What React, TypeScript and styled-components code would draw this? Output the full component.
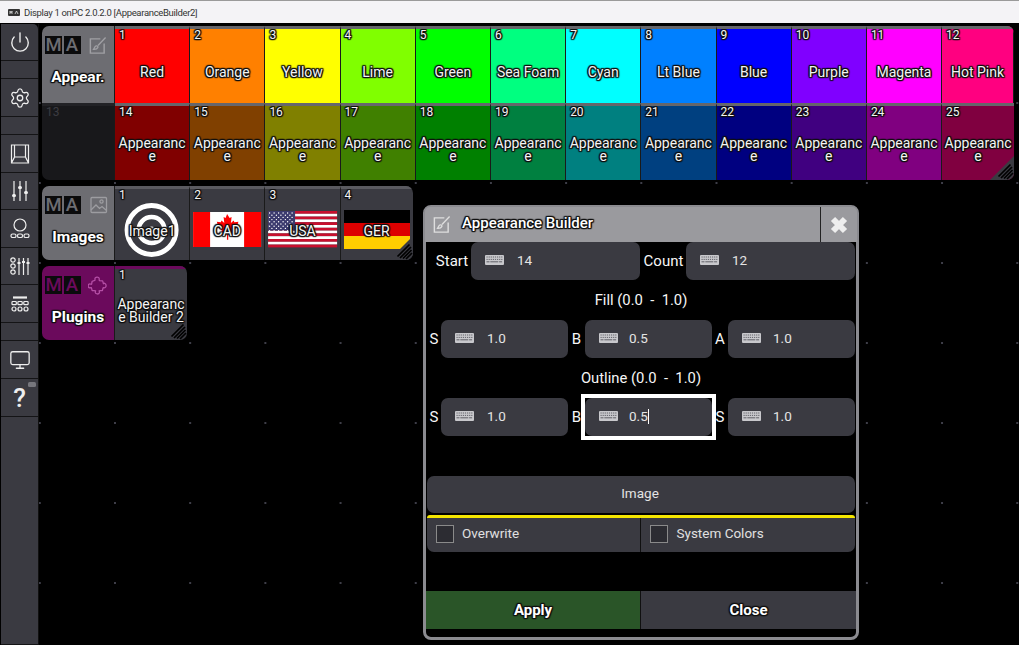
import React from "react";
import styled, { createGlobalStyle, css } from "styled-components";
import { Power, Settings, Monitor } from "lucide-react";

const Global = createGlobalStyle`
  html, body { margin: 0; padding: 0; background: #000; height: 100%; overflow: hidden; }
  #root { height: 100%; }
  * { box-sizing: border-box; }
`;

const outline = css`
  text-shadow: 1px 0 1px #111, -1px 0 1px #111, 0 1px 1px #111, 0 -1px 1px #111, 1px 1px 1px #111, -1px -1px 1px #111, 1px -1px 1px #111, -1px 1px 1px #111;
`;

const Page = styled.div`
  width: 1019px; height: 645px; display: flex; flex-direction: column; position: relative;
  font-family: Roboto, "Liberation Sans", sans-serif; color: #f0f0f0; background: #000; overflow: hidden;
`;
const TitleBar = styled.header`
  height: 24px; flex: none; display: flex; align-items: center; gap: 4px; padding: 0 0 0 8px;
  background: #f4f3f6; border-top: 1px solid #9a9a9a; border-bottom: 1px solid #000; color: #333;
  font: 9.5px Roboto, "Liberation Sans", sans-serif; letter-spacing: -0.33px;
`;
const Work = styled.div`flex: 1; display: flex; min-height: 0;`;
const Sidebar = styled.nav`
  width: 39px; flex: none; display: flex; flex-direction: column; padding-left: 1px; background: #000; border-right: 1px solid #111;
`;
const SideButton = styled.div<{ $h: number; $fill?: boolean }>`
  height: ${p => p.$h}px; flex: ${p => (p.$fill ? 1 : "none")}; position: relative;
  display: flex; align-items: center; justify-content: center;
  background: #3a3a41; border-bottom: 1px solid #141416; color: #eee;
  &:first-child { border-top-right-radius: 5px; }
`;
const Badge = styled.span`
  position: absolute; top: 3px; right: 2px; width: 8px; height: 5px; border-radius: 1.5px; background: #77777d;
`;
const Question = styled.span`font: 500 26px Roboto, sans-serif; color: #eee;`;
const Main = styled.main`
  flex: 1; padding: 2px 0 0 3px; display: flex; flex-direction: column; gap: 6px; position: relative;
  background-image: radial-gradient(circle at 1px 1px, #3e3e48 0.9px, transparent 1.3px);
  background-size: 75.2px 80px; background-position: 75px 78px;
`;
const Pool = styled.section<{ $cols: number; $rowH: number }>`
  display: grid; width: fit-content; border-radius: 7px; overflow: hidden;
  grid-template-columns: 73px ${p => (p.$cols > 1 ? `repeat(${p.$cols - 1}, 75.2px)` : "")} 72px;
  grid-auto-rows: ${p => p.$rowH}px;
`;
const Head = styled.div<{ $bg: string }>`
  background: ${p => p.$bg}; display: flex; flex-direction: column; align-items: center; padding: 10px 0 0 0; border-right: 1px solid #1a1a1a;
`;
const HeadTop = styled.div`display: flex; align-items: center; align-self: flex-start; padding-left: 3px; height: 18px;`;
const Logo = styled.span<{ $fg: string }>`
  width: 17px; height: 18px; background: #0b0b0c; color: ${p => p.$fg}; font: 500 18.5px Roboto, sans-serif; display: flex; align-items: center; justify-content: center; margin-right: 1.5px;
`;
const GlyphSvg = styled.svg<{ $m?: number }>`margin-left: ${p => p.$m ?? 0}px; flex: none;`;
const HeadName = styled.div`
  margin-top: 14px; font-size: 15.5px; font-weight: 700; color: #fff; ${outline}
`;
const Cell = styled.div<{ $bg: string; $band: string }>`
  position: relative; background: ${p => p.$bg}; border-top: 3px solid ${p => p.$band}; border-right: 1px solid #1a1a1a;
  display: flex; flex-direction: column; color: #f4f4f4; overflow: hidden;
  &:last-child { border-right: 0; }
`;
const Num = styled.span<{ $dim?: boolean }>`
  font-size: 12px; line-height: 13px; padding-left: 4px; height: 13px; flex: none; z-index: 1;
  color: ${p => (p.$dim ? "#3c3c42" : "#f4f4f4")}; ${p => (p.$dim ? "" : outline)}
`;
const Label = styled.div`
  flex: 1; display: flex; align-items: center; justify-content: center; text-align: center; padding: 0 1px; z-index: 1;
  font-size: 14px; line-height: 13px; overflow-wrap: anywhere; ${outline}
`;
const LabelText = styled.span`display: block; width: 100%;`;
const Pic = styled.svg`position: absolute; left: 0; top: 0; width: 100%; height: 100%;`;
const Corner = styled.svg`position: absolute; right: 0; bottom: 0; z-index: 2;`;

const Dialog = styled.div`
  position: absolute; left: 423px; top: 205px; width: 436px; height: 435px; border: 3px solid #8b8b90; border-radius: 8px; background: #000;
  display: flex; flex-direction: column; padding-bottom: 7px;
`;
const DialogTitle = styled.div`
  height: 35px; flex: none; margin: -1px -1px 0; background: #9a9a9e; display: flex; align-items: center; padding-left: 7px; border-radius: 5px 5px 0 0;
  font-size: 15px; font-weight: 500; color: #fff; ${outline}
`;
const TitleText = styled.span`margin-left: 11px; flex: 1; padding-bottom: 3px;`;
const CloseBox = styled.div`
  width: 37px; height: 100%; border-left: 1px solid #222; display: flex; align-items: center; justify-content: center;
`;
const Row = styled.div`
  display: flex; margin: 0 0 0 1px; height: 38px; flex: none;
`;
const FieldLabel = styled.div<{ $w: number; $pad?: number }>`
  width: ${p => p.$w}px; flex: none; display: flex; align-items: center; justify-content: center; padding-left: ${p => p.$pad ?? 0}px;
  font-size: 15px; font-weight: 400; color: #f6f6f6;
`;
const Input = styled.div<{ $w: number; $focus?: boolean; $gap: number }>`
  width: ${p => p.$w}px; flex: none; height: 38px; background: #3a3a41; border-radius: 7px; display: flex; align-items: center; padding: 0 0 2px 14px; gap: ${p => p.$gap}px;
  font-size: 13.5px; color: #e4e4e4; position: relative;
  ${p => p.$focus && css`
    &::after { content: ""; position: absolute; left: -4px; right: -4px; top: -4px; bottom: -4px; border: 4px solid #fff; }
  `}
`;
const Caret = styled.span`display: inline-block; width: 1px; height: 15px; background: #fff; vertical-align: middle;`;
const SectionLabel = styled.div`
  height: 40px; flex: none; display: flex; align-items: center; justify-content: center; font-size: 14.8px; font-weight: 400; color: #f6f6f6; white-space: pre;
`;
const Wide = styled.div`
  margin: 40px 0 0 1px; height: 37px; flex: none; width: 428px; background: #3a3a41; border-radius: 7px; display: flex; align-items: center; justify-content: center; padding: 0 2px 4px 0; font-size: 13.5px; color: #e4e4e4;
`;
const Checks = styled.div`
  margin: 2px 0 0 1px; height: 37px; flex: none; width: 428px; display: grid; grid-template-columns: 213.5px 214.5px; border-radius: 3px 3px 7px 7px; overflow: hidden; border-top: 3px solid #f4e600;
`;
const Check = styled.div`
  background: #3a3a41; display: flex; align-items: center; padding: 0 0 2px 9px; gap: 8px; font-size: 13.5px; color: #e0e0e0; border-right: 1px solid #101010;
  &:last-child { border-right: 0; gap: 9px; }
`;
const CheckText = styled.span`position: relative; top: -1px;`;
const Box = styled.span`width: 18px; height: 18px; border: 1.5px solid #8a8a8a; background: #2c2c32; flex: none;`;
const Footer = styled.div`
  margin: 39px 0 0 0; height: 38px; flex: none; display: grid; grid-template-columns: 215px 1fr;
`;
const FootBtn = styled.div<{ $bg: string }>`
  background: ${p => p.$bg}; display: flex; align-items: center; justify-content: center; font-size: 15px; font-weight: 700; color: #fff; ${outline}
  border-right: 1px solid #101010; &:last-child { border-right: 0; }
`;

const hues = [
  ["Red", 255, 0, 0], ["Orange", 255, 128, 0], ["Yellow", 255, 255, 0], ["Lime", 128, 255, 0], ["Green", 0, 255, 0], ["Sea Foam", 0, 255, 128],
  ["Cyan", 0, 255, 255], ["Lt Blue", 0, 128, 255], ["Blue", 0, 0, 255], ["Purple", 128, 0, 255], ["Magenta", 255, 0, 255], ["Hot Pink", 255, 0, 128],
] as [string, number, number, number][];
const rgb = (r: number, g: number, b: number, k = 1) => `rgb(${Math.round(r * k)},${Math.round(g * k)},${Math.round(b * k)})`;

const EditGlyph = ({ c, s = 19, m = 0 }: { c: string; s?: number; m?: number }) => (
  <GlyphSvg $m={m} width={s} height={s} viewBox="0 0 20 20" fill="none" stroke={c} strokeWidth={1.5}>
    <path d="M13 3H2.5v15H17V8" />
    <path d="M18.5 1.5 10.5 10M8.5 10.5c-1.600.5-1.500 2-2.700 3.500 2 .2 3.800-.3 4.600-2 .4-1-.8-2-1.900-1.500Z" strokeWidth={1.4} />
  </GlyphSvg>
);
const ImageGlyph = () => (
  <GlyphSvg $m={8} width={18} height={18} viewBox="0 0 18 18" fill="none" stroke="#9d9da1" strokeWidth={1.3}>
    <rect x="1" y="1.500" width="15.500" height="15" rx="1" />
    <circle cx="11.500" cy="5.500" r="1.600" />
    <path d="M1 14l5-5 3.500 3.500L12 10.500l4.500 4" />
  </GlyphSvg>
);
const PuzzleGlyph = () => (
  <GlyphSvg $m={6} width={20} height={20} viewBox="0 0 20 20" fill="none" stroke="#b54fa6" strokeWidth={1.3}>
    <path d="M7 4.500c-.8-3 4.800-3.400 4.200 0 0 .5-.1.8.3 1.200l3 .1c.5.1.6 2.400.9 2.800 2.400-1.700 4.200 3.800.8 4.200-.5 0-.9-.3-1.100 0l-.7 2.700c-.2.5-2.700-.2-3.200.2-.3.4.6 1.100.2 2.100-.7 1.800-4 1.500-4.200-.6 0-.8.7-1.100.3-1.500-.5-.4-3.200.1-3.400-.3l-.7-2.700c-.3-.4-.7.4-1.700.2-2.400-.4-1.900-4.500.6-4 .6.1.9.6 1.300.2l.5-2.800c.2-.4 2.600-.6 2.900-1.200Z" />
  </GlyphSvg>
);
const Keyboard = () => (
  <svg width="19" height="10" viewBox="0 0 19 10" style={{ flex: "none" }}>
    <rect width="19" height="10" rx="1" fill="#c8c8cc" />
    {[0, 1, 2].map(r => (
      <path key={r} d={`M1.500 ${2 + r * 2.400}h16`} stroke="#55555c" strokeWidth="0.9" strokeDasharray={r === 2 ? "3 .8 8 .8 3" : "1.200 .9"} />
    ))}
  </svg>
);
const ResizeCorner = ({ tri }: { tri?: boolean }) => (
  <Corner width="24" height="24" viewBox="0 0 24 24">
    {tri && <path d="M24 0v24H0Z" fill="#3a3a41" />}
    <path d="M11 22 22 11M14 22.500 22.500 14M8.500 20.500 20.500 8.500M17 23l6-6" stroke="#000" strokeWidth="1.700" />
  </Corner>
);

const Target = () => (
  <Pic viewBox="0 0 74 71">
    <circle cx="36.500" cy="41" r="24.500" fill="none" stroke="#fff" strokeWidth="5" />
    <circle cx="36.500" cy="41" r="13" fill="none" stroke="#fff" strokeWidth="4.500" />
    <circle cx="36.500" cy="41" r="3.500" fill="#fff" />
  </Pic>
);
const Canada = () => (
  <Pic viewBox="0 0 74 71">
    <rect x="3" y="23" width="68" height="35" fill="#fff" />
    <rect x="3" y="23" width="17" height="35" fill="#f00" />
    <rect x="54" y="23" width="17" height="35" fill="#f00" />
    <path d="M37 25l2.500 4 2-1-.7 6 2.800-2.400.7 1.600 4-.4-1 3.500 1.400.8-5.500 4.500.5 1.800-5.700-.6.2 8h-1.400l.2-8-5.700.6.5-1.800-5.500-4.500 1.400-.8-1-3.500 4 .4.7-1.600 2.800 2.400-.7-6 2 1Z" fill="#f00" />
  </Pic>
);
const Usa = () => {
  const stars: [number, number][] = [];
  for (let r = 0; r < 9; r++) for (let c = 0; c < (r % 2 ? 5 : 6); c++) stars.push([4.500 + (r % 2 ? 2.300 : 0) + c * 4.500, 24 + r * 2.200]);
  return (
    <Pic viewBox="0 0 74 71">
      {Array.from({ length: 13 }, (_, i) => <rect key={i} x="3" y={22 + i * 2.800} width="69" height="2.800" fill={i % 2 ? "#fff" : "#c8102e"} />)}
      <rect x="3" y="22" width="27" height="19.600" fill="#3c3b6e" />
      {stars.map(([x, y], i) => <circle key={i} cx={x} cy={y} r=".7" fill="#fff" />)}
    </Pic>
  );
};
const Germany = () => (
  <Pic viewBox="0 0 72 71">
    <rect x="3" y="21" width="66" height="13" fill="#000" />
    <rect x="3" y="34" width="66" height="13" fill="#d00" />
    <rect x="3" y="47" width="66" height="13" fill="#ffce00" />
  </Pic>
);

const Icon = ({ children, w = 22, h = 22 }: { children: React.ReactNode; w?: number; h?: number }) => (
  <svg width={w} height={h} viewBox={`0 0 ${w} ${h}`} fill="none" stroke="#eee" strokeWidth="1.200">{children}</svg>
);

const sideItems: { h: number; icon?: React.ReactNode; fill?: boolean }[] = [
  { h: 37, icon: <Power size={22} color="#eee" strokeWidth={1.5} /> },
  { h: 18 },
  { h: 38, icon: <Settings size={22} color="#eee" strokeWidth={1.4} /> },
  { h: 18 },
  { h: 38, icon: <Icon><path d="M2.500 2h17v18h-17ZM5.500 2v12l-3 6M16.500 2v12l3 6M5.500 14h11M2.500 20h17" /></Icon> },
  { h: 37, icon: <Icon><path d="M5 1v20M11 1v20M17 1v20" /><g fill="#eee" stroke="none"><rect x="3" y="14" width="4" height="3" rx="1.500"/><rect x="9" y="6" width="4" height="3" rx="1.500"/><rect x="15" y="11" width="4" height="3" rx="1.500"/></g></Icon> },
  { h: 38, icon: <Icon><circle cx="11" cy="7" r="6" /><rect x="2" y="16" width="5" height="3.500" rx="1.600" /><rect x="8.500" y="16" width="5" height="3.500" rx="1.600" /><rect x="15" y="16" width="5" height="3.500" rx="1.600" /></Icon> },
  { h: 37, icon: <Icon><circle cx="4" cy="5" r="2.200"/><circle cx="4" cy="11" r="2.200"/><circle cx="4" cy="17" r="2.200"/><path d="M10 3v17M14.500 3v17M19 3v17" /><g fill="#eee" stroke="none"><rect x="8.500" y="7" width="3" height="2"/><rect x="13" y="6" width="3" height="2"/><rect x="17.500" y="7" width="3" height="2"/></g></Icon> },
  { h: 38, icon: <Icon><path d="M4 4.500h14" strokeWidth="2.200"/><rect x="3" y="8.500" width="4.300" height="3.200" rx=".8"/><rect x="8.900" y="8.500" width="4.300" height="3.200" rx=".8"/><rect x="14.800" y="8.500" width="4.300" height="3.200" rx=".8"/><circle cx="5" cy="16" r="2"/><circle cx="11" cy="16" r="2"/><circle cx="17" cy="16" r="2"/></Icon> },
  { h: 18 },
  { h: 38, icon: <Monitor size={22} color="#eee" strokeWidth={1.400} /> },
  { h: 38, icon: <><Question>?</Question><Badge /></> },
  { h: 0, fill: true },
];

const Field = ({ w, value, focus, gap = 13 }: { w: number; value: string; focus?: boolean; gap?: number }) => (
  <Input $w={w} $focus={focus} $gap={gap}>
    <Keyboard />
    <span>{value}{focus && <Caret />}</span>
  </Input>
);

export default function App() {
  return (
    <Page>
      <Global />
      <TitleBar>
        <svg width="12" height="7" viewBox="0 0 12 7"><rect width="12" height="7" rx="1" fill="#333" /><path d="M2 5V2l1 2 1-2v3M7 5l1.500-3L10 5" stroke="#ddd" strokeWidth=".8" fill="none" /></svg>
        <span>Display 1 onPC 2.0.2.0 [AppearanceBuilder2]</span>
      </TitleBar>
      <Work>
        <Sidebar>
          {sideItems.map((it, i) => (
            <SideButton key={i} $h={it.h} $fill={it.fill}>{it.icon}</SideButton>
          ))}
        </Sidebar>
        <Main>
          <Pool $cols={12} $rowH={77}>
            <Head $bg="#6d6d72">
              <HeadTop><Logo $fg="#6d6d72">M</Logo><Logo $fg="#6d6d72">A</Logo><EditGlyph c="#a0a0a4" m={6} /></HeadTop>
              <HeadName>Appear.</HeadName>
            </Head>
            {hues.map(([n, r, g, b], i) => (
              <Cell key={n} $bg={rgb(r, g, b)} $band="#66666b">
                <Num>{i + 1}</Num>
                <Label><LabelText>{n}</LabelText></Label>
              </Cell>
            ))}
            <Cell $bg="#18181b" $band="#222226"><Num $dim>13</Num></Cell>
            {hues.map(([, r, g, b], i) => (
              <Cell key={i} $bg={rgb(r, g, b, 0.5)} $band="#66666b">
                <Num>{i + 14}</Num>
                <Label><LabelText>Appearance</LabelText></Label>
                {i === 11 && <ResizeCorner tri />}
              </Cell>
            ))}
          </Pool>
          <Pool $cols={4} $rowH={74}>
            <Head $bg="#6d6d72">
              <HeadTop><Logo $fg="#6d6d72">M</Logo><Logo $fg="#6d6d72">A</Logo><ImageGlyph /></HeadTop>
              <HeadName>Images</HeadName>
            </Head>
            <Cell $bg="#3a3a41" $band="#5a5a60"><Target /><Num>1</Num><Label><LabelText>Image1</LabelText></Label></Cell>
            <Cell $bg="#3a3a41" $band="#5a5a60"><Canada /><Num>2</Num><Label><LabelText>CAD</LabelText></Label></Cell>
            <Cell $bg="#3a3a41" $band="#5a5a60"><Usa /><Num>3</Num><Label><LabelText>USA</LabelText></Label></Cell>
            <Cell $bg="#3a3a41" $band="#5a5a60"><Germany /><Num>4</Num><Label><LabelText>GER</LabelText></Label><ResizeCorner tri /></Cell>
          </Pool>
          <Pool $cols={1} $rowH={74}>
            <Head $bg="#6b0a5c">
              <HeadTop><Logo $fg="#6b0a5c">M</Logo><Logo $fg="#6b0a5c">A</Logo><PuzzleGlyph /></HeadTop>
              <HeadName>Plugins</HeadName>
            </Head>
            <Cell $bg="#3a3a41" $band="#6b0a5c"><Num>1</Num><Label><LabelText>Appearance Builder 2</LabelText></Label><ResizeCorner /></Cell>
          </Pool>
        </Main>
      </Work>
      <Dialog>
        <DialogTitle>
          <EditGlyph c="#dedede" s={19} />
          <TitleText>Appearance Builder</TitleText>
          <CloseBox>
            <svg width="20" height="20" viewBox="0 0 20 20"><path d="M4 4l12 12M16 4 4 16" stroke="#eee" strokeWidth="6" /></svg>
          </CloseBox>
        </DialogTitle>
        <Row>
          <FieldLabel $w={44} $pad={6}>Start</FieldLabel><Field w={169} value="14" />
          <FieldLabel $w={46} $pad={1}>Count</FieldLabel><Field w={169} value="12" />
        </Row>
        <SectionLabel>Fill (0.0  -  1.0)</SectionLabel>
        <Row>
          <FieldLabel $w={14}>S</FieldLabel><Field w={127} value="1.0" />
          <FieldLabel $w={17}>B</FieldLabel><Field w={127} value="0.5" gap={11} />
          <FieldLabel $w={16}>A</FieldLabel><Field w={127} value="1.0" gap={12} />
        </Row>
        <SectionLabel>Outline (0.0  -  1.0)</SectionLabel>
        <Row>
          <FieldLabel $w={14}>S</FieldLabel><Field w={127} value="1.0" />
          <FieldLabel $w={17}>B</FieldLabel><Field w={127} value="0.5" gap={11} focus />
          <FieldLabel $w={16}>S</FieldLabel><Field w={127} value="1.0" gap={12} />
        </Row>
        <Wide>Image</Wide>
        <Checks>
          <Check><Box /><CheckText>Overwrite</CheckText></Check>
          <Check><Box /><CheckText>System Colors</CheckText></Check>
        </Checks>
        <Footer>
          <FootBtn $bg="#2a5528">Apply</FootBtn>
          <FootBtn $bg="#3a3a41">Close</FootBtn>
        </Footer>
      </Dialog>
    </Page>
  );
}
